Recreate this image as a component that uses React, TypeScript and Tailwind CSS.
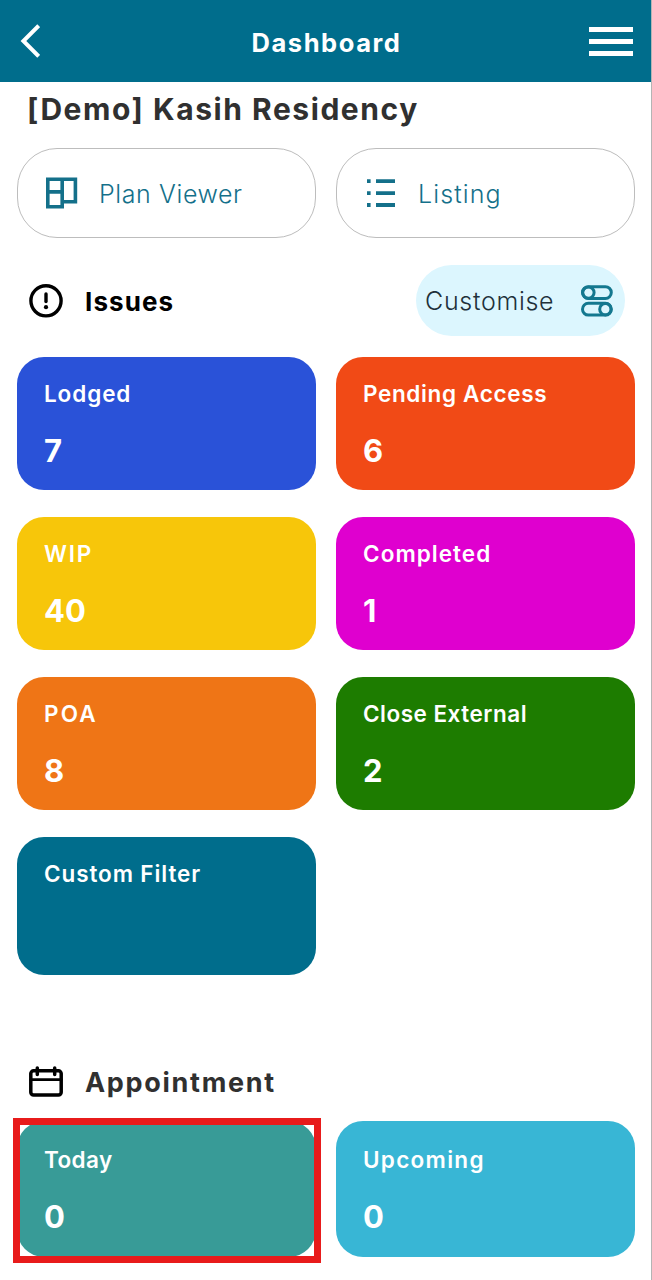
const issues = [
  { label: "Lodged", count: "7", color: "bg-[#2a52d8]", spacing: "tracking-[0.9px]" },
  { label: "Pending Access", count: "6", color: "bg-[#f14a16]", spacing: "tracking-[0.65px]" },
  { label: "WIP", count: "40", color: "bg-[#f7c60a]", spacing: "tracking-[1.8px]" },
  { label: "Completed", count: "1", color: "bg-[#df00cf]", spacing: "tracking-[1.05px]" },
  { label: "POA", count: "8", color: "bg-[#ef7516]", spacing: "tracking-[2.2px]" },
  { label: "Close External", count: "2", color: "bg-[#1d7c00]", spacing: "tracking-[0.5px]" },
];

function Card({ label, count, color, spacing, size = "h-[132.5px] pt-[21px]" }: any) {
  return (
    <article className={`${color} ${size} rounded-[27px] pl-[27px] text-white`}>
      <p className={`text-[22.5px] leading-8 font-semibold whitespace-nowrap ${spacing}`}>{label}</p>
      {count && <p className="mt-[21px] text-[31px] leading-10 font-bold">{count}</p>}
    </article>
  );
}

function BackIcon() {
  return (
    <svg className="w-5 h-9" viewBox="0 0 20 36" fill="none" stroke="#fff" strokeWidth="4">
      <path d="M18.7 2.6 3.4 18 18.7 33.4" />
    </svg>
  );
}

function PlanIcon() {
  return (
    <svg className="w-8 h-8" viewBox="0 0 32 32" fill="none" stroke="#14708a" strokeWidth="3.6">
      <path d="M16.2 2.3H1.8v27.4h14.4zM1.8 14.9h14.4M16.2 2.3h13.2v22.5H16.2" />
    </svg>
  );
}

function ListIcon() {
  return (
    <svg className="w-7 h-7" viewBox="0 0 28 28" fill="none" stroke="#14708a" strokeWidth="3.8">
      <path d="M0 2.2h3.6M9 2.2H28M0 14.1h3.6M9 14.1H28M0 26h3.6M9 26H28" />
    </svg>
  );
}

function AlertIcon() {
  return (
    <svg className="w-[34px] h-[34px]" viewBox="0 0 34 34" fill="none" stroke="#000" strokeWidth="3.4">
      <circle cx="17" cy="16.8" r="15.1" />
      <path d="M17 10v7.6" strokeLinecap="round" />
      <circle cx="17" cy="23.2" r="2.1" fill="#000" stroke="none" />
    </svg>
  );
}

function SwitchesIcon() {
  return (
    <svg className="w-8 h-8" viewBox="0 0 32 32" fill="none" stroke="#14788f" strokeWidth="3">
      <rect x="1.5" y="1.7" width="28.8" height="11.8" rx="5.9" />
      <circle cx="7.4" cy="7.6" r="5.7" />
      <rect x="1.5" y="18.3" width="28.8" height="11.8" rx="5.9" />
      <circle cx="24.4" cy="24.2" r="5.7" />
    </svg>
  );
}

function CalendarIcon() {
  return (
    <svg className="w-[34px] h-[31px]" viewBox="0 0 34 31" fill="none" stroke="#000" strokeWidth="3.5" strokeLinecap="round">
      <rect x="1.8" y="4.8" width="30.4" height="24.2" rx="2.8" />
      <path d="M1.8 13.6h30.4" strokeWidth="2.8" />
      <path d="M8.3 2v6.6M25.7 2v6.6" />
    </svg>
  );
}

export default function App() {
  return (
    <div className="w-[652px] h-[1280px] overflow-hidden bg-white border-r border-[#b4b4b4] font-['Inter','Open_Sans',sans-serif]">
      <header className="flex items-center justify-between h-[82px] w-[652px] bg-[#006d8c] border-r border-[#315963] pl-5 pr-[18px]">
        <BackIcon />
        <h1 className="pt-1 pl-6 text-[25.5px] font-bold text-white tracking-[1.55px]">Dashboard</h1>
        <div className="flex flex-col gap-[7px]">
          <span className="w-[44px] h-[5px] bg-white" />
          <span className="w-[44px] h-[5px] bg-white" />
          <span className="w-[44px] h-[5px] bg-white" />
        </div>
      </header>
      <main className="w-[652px] px-[17px]">
        <h2 className="h-[66px] pt-[7px] pl-[10px] text-[30px] leading-10 font-bold text-[#303030] tracking-[1.55px]">
          [Demo] Kasih Residency
        </h2>
        <nav className="grid grid-cols-2 gap-5 text-[25px] font-light text-[#14708a]">
          <div className="flex items-center h-[90px] rounded-[40px] border border-[#bdbdbd] pl-7">
            <PlanIcon />
            <span className="ml-[21px] pt-[3px] tracking-[0.6px]">Plan Viewer</span>
          </div>
          <div className="flex items-center h-[90px] rounded-[40px] border border-[#bdbdbd] pl-[30px]">
            <ListIcon />
            <span className="ml-[23px] pt-[3px] tracking-[1.1px]">Listing</span>
          </div>
        </nav>
        <section>
          <div className="flex items-center h-[71px] mt-[27px] pl-3 pr-[10px]">
            <AlertIcon />
            <h3 className="ml-[22px] pt-[2px] text-[26px] font-bold text-black tracking-[1.1px]">Issues</h3>
            <div className="flex items-center justify-between ml-auto w-[209px] h-[71px] rounded-full bg-[#dcf6fe] pl-[9px] pr-3">
              <span className="pt-[3px] text-[25px] font-light text-[#20303a] tracking-[0.7px]">Customise</span>
              <SwitchesIcon />
            </div>
          </div>
          <div className="grid grid-cols-2 gap-x-5 gap-y-[27.6px] mt-[21px]">
            {issues.map((item) => (
              <Card key={item.label} {...item} />
            ))}
            <Card label="Custom Filter" color="bg-[#006d8c]" spacing="tracking-[0.9px]" size="h-[138px] pt-[21px]" />
          </div>
        </section>
        <section className="mt-[91px]">
          <div className="flex items-center h-[31px] pl-3">
            <CalendarIcon />
            <h3 className="ml-[22px] pt-[2px] text-[27px] font-bold text-[#303030] tracking-[1.7px]">Appointment</h3>
          </div>
          <div className="grid grid-cols-2 gap-x-5 mt-6">
            <div className="relative">
              <Card label="Today" count="0" color="bg-[#389b97]" spacing="tracking-[0.4px]" size="h-[136px] pt-[23px]" />
              <div className="absolute -left-1 -top-[3px] w-[308px] h-[145px] border-[7px] border-[#e81b1b]" />
            </div>
            <Card label="Upcoming" count="0" color="bg-[#38b6d5]" spacing="tracking-[1.3px]" size="h-[136px] pt-[23px]" />
          </div>
        </section>
      </main>
    </div>
  );
}
